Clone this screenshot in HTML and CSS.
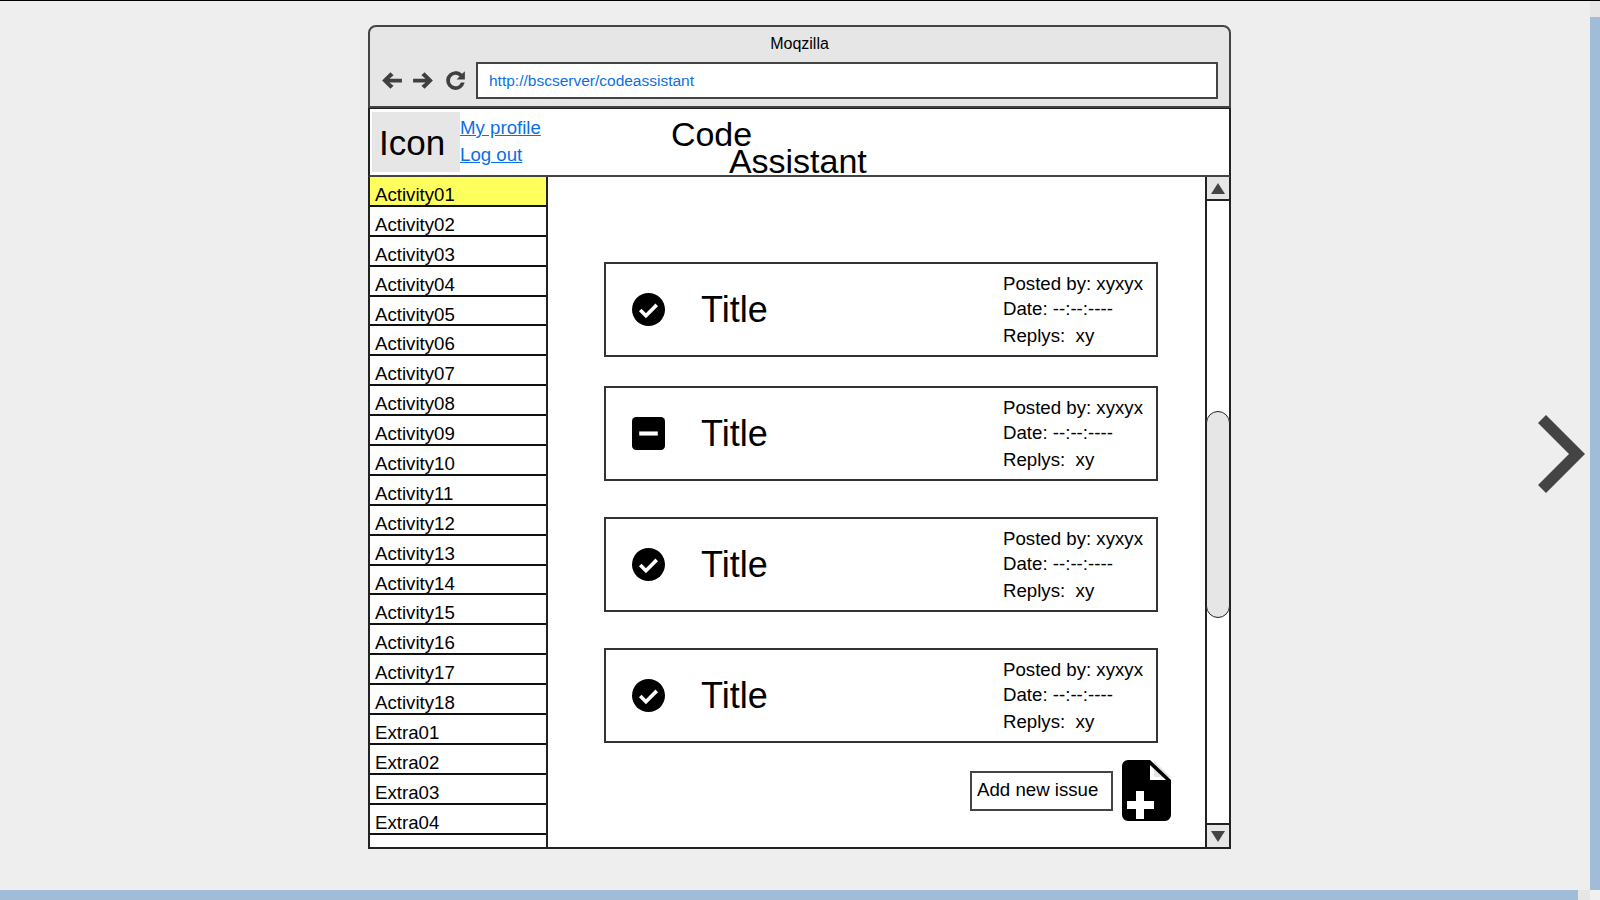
FILE: index.html
```html
<!DOCTYPE html>
<html>
<head>
  <title>Moqzilla</title>
  <link rel="stylesheet" href="styles.css">
</head>
<body>
  <div class="stage">
    <div class="window">
      <div class="chrome">
        <div class="chrome-title">Moqzilla</div>
        <div class="chrome-bar">
          <svg class="nav-icon" viewBox="0 0 24 24"><path d="M3 12 L11 4 L14 7 L10 10.2 H22 V13.8 H10 L14 17 L11 20 Z"/></svg>
          <svg class="nav-icon" viewBox="0 0 24 24"><path d="M21 12 L13 4 L10 7 L14 10.2 H2 V13.8 H14 L10 17 L13 20 Z"/></svg>
          <svg class="nav-icon" viewBox="0 0 24 24"><path d="M12 3 A9 9 0 0 1 18.4 5.6 L21 3 V11 H13 L15.9 8.1 A5.5 5.5 0 1 0 17.2 14 H20.8 A9 9 0 1 1 12 3 Z"/></svg>
          <div class="url">http://bscserver/codeassistant</div>
        </div>
      </div>

      <div class="header">
        <div class="logo">Icon</div>
        <div class="user-links">
          <a href="#">My profile</a>
          <a href="#">Log out</a>
        </div>
        <div class="app-title">
          <span class="app-title-a">Code</span>
          <span class="app-title-b">Assistant</span>
        </div>
      </div>

      <div class="body">
        <ul class="sidebar">
          <li class="active">Activity01</li>
          <li>Activity02</li>
          <li>Activity03</li>
          <li>Activity04</li>
          <li>Activity05</li>
          <li>Activity06</li>
          <li>Activity07</li>
          <li>Activity08</li>
          <li>Activity09</li>
          <li>Activity10</li>
          <li>Activity11</li>
          <li>Activity12</li>
          <li>Activity13</li>
          <li>Activity14</li>
          <li>Activity15</li>
          <li>Activity16</li>
          <li>Activity17</li>
          <li>Activity18</li>
          <li>Extra01</li>
          <li>Extra02</li>
          <li>Extra03</li>
          <li>Extra04</li>
          <li class="filler"></li>
        </ul>

        <div class="content">
          <div class="issue first">
            <svg class="status" viewBox="0 0 32 32"><circle cx="16" cy="16" r="16"/><path class="tick" d="M8 16.5 L13.5 22 L24 11.5"/></svg>
            <div class="issue-title">Title</div>
            <div class="meta">
              <div>Posted by: xyxyx</div>
              <div>Date: --:--:----</div>
              <div class="replies">Replys:&nbsp; xy</div>
            </div>
          </div>
          <div class="issue second">
            <svg class="status" viewBox="0 0 32 32"><rect width="32" height="32" rx="4"/><rect class="dash" x="7" y="14" width="18" height="4"/></svg>
            <div class="issue-title">Title</div>
            <div class="meta">
              <div>Posted by: xyxyx</div>
              <div>Date: --:--:----</div>
              <div class="replies">Replys:&nbsp; xy</div>
            </div>
          </div>
          <div class="issue third">
            <svg class="status" viewBox="0 0 32 32"><circle cx="16" cy="16" r="16"/><path class="tick" d="M8 16.5 L13.5 22 L24 11.5"/></svg>
            <div class="issue-title">Title</div>
            <div class="meta">
              <div>Posted by: xyxyx</div>
              <div>Date: --:--:----</div>
              <div class="replies">Replys:&nbsp; xy</div>
            </div>
          </div>
          <div class="issue third">
            <svg class="status" viewBox="0 0 32 32"><circle cx="16" cy="16" r="16"/><path class="tick" d="M8 16.5 L13.5 22 L24 11.5"/></svg>
            <div class="issue-title">Title</div>
            <div class="meta">
              <div>Posted by: xyxyx</div>
              <div>Date: --:--:----</div>
              <div class="replies">Replys:&nbsp; xy</div>
            </div>
          </div>
          <div class="actions">
            <div class="add-btn">Add new issue</div>
            <svg class="add-icon" viewBox="0 0 49 61">
              <path d="M6 0 H28 V20 H49 V55 A6 6 0 0 1 43 61 H6 A6 6 0 0 1 0 55 V6 A6 6 0 0 1 6 0 Z"/>
              <path d="M32 1 L49 17 H32 Z" class="corner"/>
              <path d="M28 0 L49 20 H44 L28 5 Z"/>
              <path class="plus" d="M14 31 H22 V41 H32 V49 H22 V59 H14 V49 H5 V41 H14 Z"/>
            </svg>
          </div>
        </div>

        <div class="vscroll">
          <div class="vbtn up"><span class="tri-up"></span></div>
          <div class="track"><div class="thumb"></div></div>
          <div class="vbtn down"><span class="tri-down"></span></div>
        </div>
      </div>
    </div>

    <svg class="next" viewBox="0 0 50 80"><path d="M9 1 L48 40 L9 79 L1 71 L32 40 L1 9 Z"/></svg>
  </div>

  <div class="page-vbar"><div class="page-vbar-fill"></div></div>
  <div class="page-hbar"><div class="page-hbar-fill"></div></div>
  <div class="page-corner"></div>
</body>
</html>
```

FILE: styles.css
```css
html, body {
  margin: 0;
  height: 100%;
  overflow: hidden;
}

body {
  display: grid;
  grid-template-columns: 1fr 10px;
  grid-template-rows: 1fr 10px;
  height: 900px;
  box-sizing: border-box;
  border-top: 1px solid #000;
  background: #eee;
  font-family: "Liberation Sans", Arial, sans-serif;
  color: #000;
}

.stage {
  display: flex;
  align-items: flex-start;
  padding: 24px 0 0 368px;
  position: relative;
  overflow: hidden;
}

.window {
  width: 863px;
  box-sizing: border-box;
  display: flex;
  flex-direction: column;
}

/* browser chrome */
.chrome {
  height: 83px;
  box-sizing: border-box;
  background: #e6e6e6;
  border: 2px solid #444;
  border-bottom: 2px solid #444;
  border-radius: 8px 8px 0 0;
}

.chrome-title {
  text-align: center;
  font-size: 16px;
  line-height: 18px;
  padding-top: 8px;
}

.chrome-bar {
  display: flex;
  align-items: center;
  gap: 7px;
  margin-top: 9px;
  padding: 0 11px 0 9px;
}

.nav-icon {
  width: 25px;
  height: 25px;
  fill: #404040;
  flex: none;
}

.url {
  flex: 1;
  height: 37px;
  margin-left: 1px;
  box-sizing: border-box;
  border: 2px solid #444;
  background: #fff;
  color: #0b6fe6;
  font-size: 15.5px;
  line-height: 33px;
  padding-left: 11px;
}

/* app header */
.header {
  display: flex;
  height: 69px;
  box-sizing: border-box;
  background: #fff;
  border: 2px solid #222;
  border-top: 1px solid #222;
  border-bottom: 2px solid #444;
  padding-top: 3px;
}

.logo {
  width: 81px;
  height: 60px;
  margin-left: 2px;
  background: #e6e6e6;
  font-size: 35px;
  line-height: 62px;
  padding-left: 7px;
  flex: none;
}

.user-links {
  display: flex;
  flex-direction: column;
  font-size: 18.67px;
  line-height: 27px;
  padding-top: 2px;
}

.user-links a {
  color: #0b6fe6;
}

.app-title {
  font-size: 34px;
  line-height: 27px;
  margin-left: 130px;
  padding-top: 9px;
}

.app-title span {
  display: block;
}

.app-title-b {
  margin-left: 58px;
}

/* main area */
.body {
  display: flex;
  height: 672px;
  background: #fff;
}

.sidebar {
  list-style: none;
  margin: 0;
  padding: 0;
  width: 180px;
  flex: none;
  box-sizing: border-box;
  border: 2px solid #222;
  border-top: 0;
  display: flex;
  flex-direction: column;
}

.sidebar li {
  height: 29.9px;
  box-sizing: border-box;
  border-bottom: 2px solid #111;
  font-size: 18.67px;
  line-height: 36px;
  padding-left: 5px;
  overflow: hidden;
  flex: none;
}

.sidebar li.active {
  background: #ffff5e;
}

.sidebar li.filler {
  flex: 1;
  border-bottom: 0;
}

.content {
  flex: 1;
  box-sizing: border-box;
  border-bottom: 2px solid #222;
  padding: 85px 0 0 56px;
}

.issue {
  width: 554px;
  height: 95px;
  box-sizing: border-box;
  border: 2px solid #333;
  display: flex;
  align-items: center;
  position: relative;
}

.issue.second {
  margin-top: 29px;
}

.issue.third {
  margin-top: 36px;
}

.status {
  width: 33px;
  height: 33px;
  margin-left: 26px;
  flex: none;
}

.tick {
  fill: none;
  stroke: #fff;
  stroke-width: 3.5;
}

.dash {
  fill: #fff;
}

.issue-title {
  font-size: 36px;
  margin-left: 36px;
  flex: 1;
}

.meta {
  font-size: 18.67px;
  line-height: 25px;
  width: 153px;
  flex: none;
}

.replies {
  margin-top: 2px;
}

.actions {
  display: flex;
  align-items: center;
  justify-content: flex-end;
  width: 567px;
  margin-top: 17px;
  gap: 9px;
}

.add-btn {
  width: 143px;
  height: 40px;
  box-sizing: border-box;
  border: 2px solid #444;
  font-size: 18.67px;
  line-height: 34px;
  padding-left: 5px;
}

.add-icon {
  width: 49px;
  height: 61px;
  flex: none;
}

.corner {
  fill: #e6e6e6;
}

.plus {
  fill: #fff;
}

/* inner scrollbar */
.vscroll {
  width: 26px;
  flex: none;
  box-sizing: border-box;
  border: 2px solid #222;
  border-top: 0;
  display: flex;
  flex-direction: column;
}

.vbtn {
  height: 22px;
  flex: none;
  background: #e6e6e6;
  display: flex;
  align-items: center;
  justify-content: center;
}

.vbtn.up {
  border-bottom: 2px solid #222;
}

.vbtn.down {
  border-top: 2px solid #222;
}

.tri-up {
  border-left: 7px solid transparent;
  border-right: 7px solid transparent;
  border-bottom: 11px solid #444;
}

.tri-down {
  border-left: 7px solid transparent;
  border-right: 7px solid transparent;
  border-top: 11px solid #444;
}

.track {
  flex: 1;
  background: #fff;
  padding-top: 210px;
}

.thumb {
  height: 207px;
  box-sizing: border-box;
  background: #e6e6e6;
  border: 1px solid #222;
  border-radius: 12px;
  margin: 0 -1px;
}

/* next arrow lies over the free canvas */
.next {
  position: absolute;
  left: 1537px;
  top: 413px;
  width: 50px;
  height: 80px;
  fill: #444;
}

/* page scrollbars */
.page-vbar {
  background: #e6e6e6;
  padding-top: 16px;
}

.page-vbar-fill {
  background: #a0bcd6;
  height: 100%;
  box-sizing: border-box;
}

.page-hbar {
  display: flex;
  background: #e6e6e6;
}

.page-hbar-fill {
  width: 1578px;
  background: #a0bcd6;
}

.page-corner {
  background: #f0f0f0;
}
```
